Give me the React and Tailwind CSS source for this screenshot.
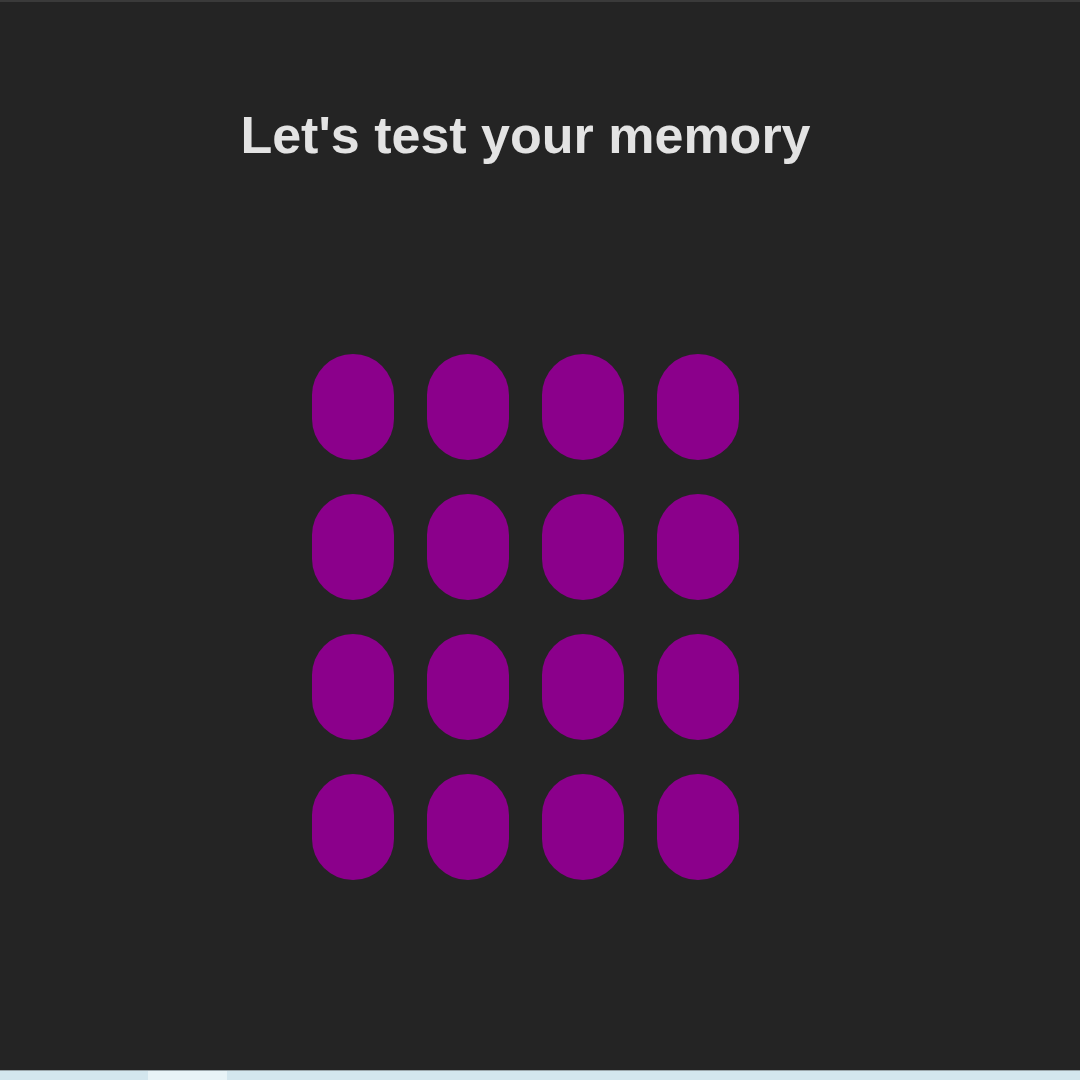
export default function App() {
  const cards = Array.from({ length: 16 }, (_, i) => i);

  return (
    <div className="h-screen w-full flex flex-col bg-[#242424] font-['Liberation_Sans',Arial,sans-serif]">
      <div className="flex-1 border-t-2 border-[#3a3a3a]">
        <div className="w-[1051px] flex flex-col items-center">
          <h1 className="mt-[107px] text-[52px] leading-none font-bold text-[#e3e3e3]">
            Let's test your memory
          </h1>
          <div className="mt-[193px] grid grid-cols-4 gap-x-[33px] gap-y-[34px]">
            {cards.map((i) => (
              <div key={i} className="w-[82px] h-[106px] rounded-full bg-[#8b008b]" />
            ))}
          </div>
        </div>
      </div>
      <div className="h-[10px] flex border-t border-[#9aa5aa] bg-[#d3e6ee]">
        <div className="ml-[148px] w-[79px] bg-[#e8f3f7]" />
      </div>
    </div>
  );
}
